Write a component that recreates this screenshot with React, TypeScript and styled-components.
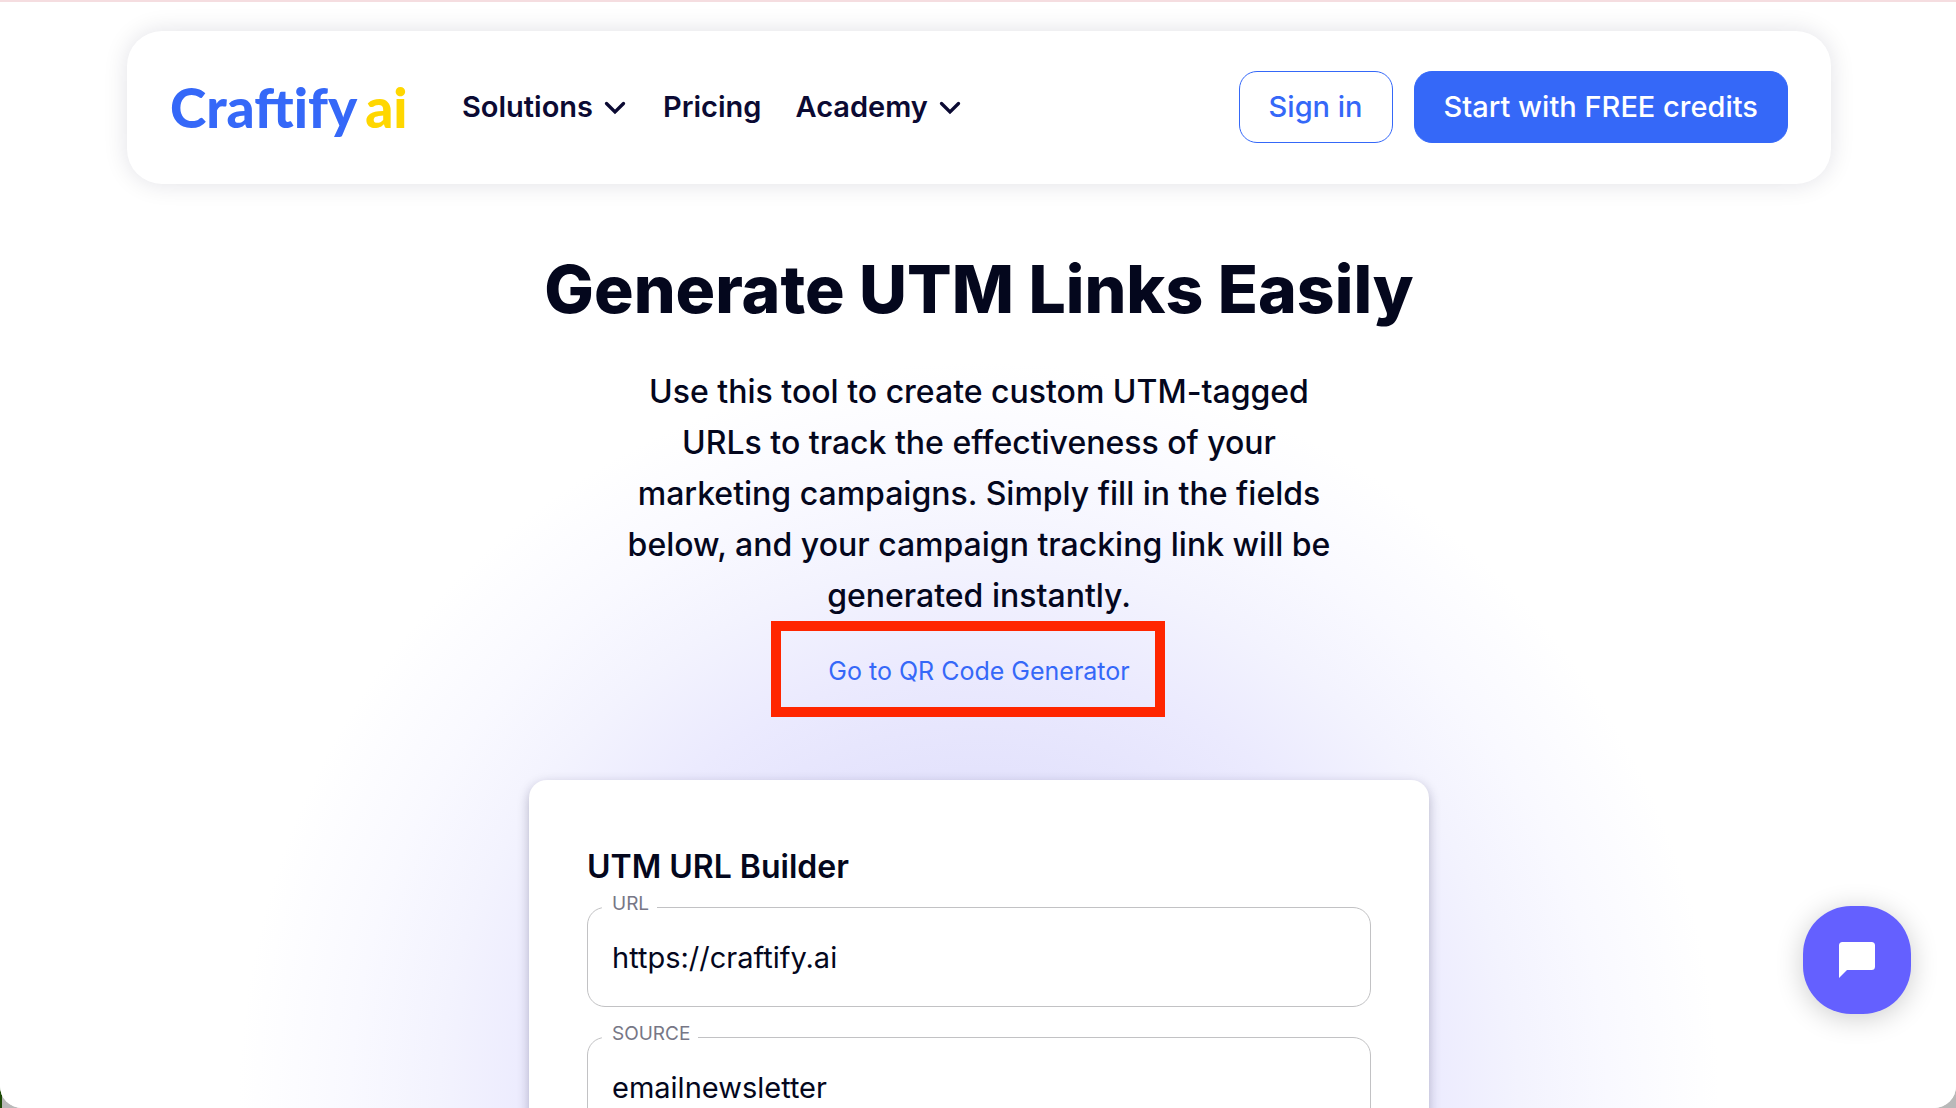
import React, { useState } from "react";
import styled, { createGlobalStyle } from "styled-components";

const ink = "#04071d";
const navy = "#0b0a33";
const blue = "#3568f8";

const GlobalStyle = createGlobalStyle`
  *, *::before, *::after { box-sizing: border-box; }
  body {
    margin: 0;
    background: linear-gradient(90deg, #1d4a06 2px, #b9b9b9 2px);
    font-family: Inter, "Liberation Sans", sans-serif;
    color: ${ink};
  }
  button, input { font: inherit; color: inherit; }
`;

const Page = styled.div`
  height: 100vh;
  overflow: hidden;
  padding-left: 2px;
  border-top: 2px solid #f5dde0;
  border-radius: 0 0 22px 22px;
  background: radial-gradient(
      circle 740px at calc(50% + 1px) 1100px,
      #dddcfb 0%,
      #e3e2fc 43%,
      #ebeafe 59%,
      #f3f3fe 73%,
      #f9f9ff 85%,
      #ffffff 100%
    )
    #ffffff;
`;

const Header = styled.header`
  display: flex;
  align-items: center;
  height: 153px;
  margin: 29px 125px 0;
  padding: 0 43px 2px;
  border-radius: 35px;
  background: #ffffff;
  box-shadow: 0 0 24px rgba(11, 10, 51, 0.12);
`;

const Logo = styled.a`
  display: flex;
  align-items: center;
  gap: 8px;
  width: 236px;
  margin-right: 56px;
  font-family: Lato, "Open Sans", sans-serif;
  font-size: 55px;
  font-weight: 900;
  line-height: 72px;
  color: ${blue};
  text-decoration: none;
`;

const LogoAccent = styled.span`
  color: #ffd700;
`;

const Nav = styled.nav`
  display: flex;
  align-items: center;
  gap: 34px;
  flex: 1;
`;

const navText = `
  font-size: 29px;
  font-weight: 600;
  line-height: 36px;
  color: ${navy};
`;

const NavLink = styled.a`
  ${navText}
  text-decoration: none;
`;

const NavMenu = styled.button`
  display: flex;
  align-items: center;
  gap: 8px;
  padding: 0;
  border: 0;
  background: none;
  && { ${navText} }
`;

const Actions = styled.div`
  display: flex;
  gap: 21px;
`;

const Button = styled.button<{ $primary?: boolean }>`
  height: 72px;
  padding: 0 29px;
  border: 1px solid ${blue};
  border-radius: 18px;
  background: ${(p) => (p.$primary ? blue : "#ffffff")};
  white-space: nowrap;
  && {
    font-size: 29px;
    font-weight: 500;
    color: ${(p) => (p.$primary ? "#ffffff" : blue)};
  }
`;

const Main = styled.main`
  display: flex;
  flex-direction: column;
  align-items: center;
`;

const Title = styled.h1`
  margin: 63px 0 0;
  font-size: 66px;
  font-weight: 800;
  line-height: 84px;
`;

const Intro = styled.p`
  width: 720px;
  margin: 35px 0 0;
  font-size: 32px;
  font-weight: 500;
  line-height: 51px;
  text-align: center;
`;

const LinkRow = styled.div`
  position: relative;
  display: flex;
  margin-top: 30px;
`;

const QrLink = styled.a`
  font-size: 25px;
  line-height: 40px;
  color: ${blue};
  text-decoration: none;
`;

const Highlight = styled.span`
  position: absolute;
  inset: -30px -35px -26px -57px;
  border: 10px solid #ff2600;
  pointer-events: none;
`;

const Card = styled.form`
  width: 900px;
  margin-top: 89px;
  padding: 67px 58px;
  border-radius: 18px;
  background: #ffffff;
  box-shadow: 0 4px 12px rgba(20, 18, 60, 0.28);
`;

const CardTitle = styled.h2`
  margin: 0 0 20px;
  font-size: 32px;
  font-weight: 600;
  line-height: 40px;
`;

const Field = styled.div`
  position: relative;
  margin-bottom: 30px;
`;

const FieldLabel = styled.label`
  position: absolute;
  top: -14px;
  left: 15px;
  padding: 0 8px 0 10px;
  background: #ffffff;
  font-size: 19px;
  line-height: 22px;
  color: #777786;
`;

const TextInput = styled.input`
  display: block;
  width: 100%;
  height: 100px;
  padding: 0 24px;
  border: 1px solid #c2c2c4;
  border-radius: 18px;
  background: #ffffff;
  outline: none;
  && { font-size: 29px; }
`;

const ChatButton = styled.button`
  position: fixed;
  right: 45px;
  bottom: 94px;
  display: grid;
  place-items: center;
  width: 108px;
  height: 108px;
  padding: 0;
  border: 0;
  border-radius: 48px;
  background: #6460ff;
  box-shadow: 0 4px 28px rgba(0, 0, 0, 0.2);
`;

const Chevron = () => (
  <svg width="28" height="28" viewBox="0 0 28 28" fill="none" aria-hidden="true">
    <path d="M5.500 10.500 14 19l8.500-8.500" stroke={navy} strokeWidth="3.300" strokeLinecap="round" strokeLinejoin="miter" />
  </svg>
);

type TextFieldProps = { id: string; label: string; initial: string };

const TextField = ({ id, label, initial }: TextFieldProps) => {
  const [value, setValue] = useState(initial);
  return (
    <Field>
      <TextInput id={id} value={value} onChange={(e) => setValue(e.target.value)} />
      <FieldLabel htmlFor={id}>{label}</FieldLabel>
    </Field>
  );
};

export default function App() {
  return (
    <>
      <GlobalStyle />
      <Page>
        <Header>
          <Logo href="#">
            <span>Craftify</span>
            <LogoAccent>ai</LogoAccent>
          </Logo>
          <Nav>
            <NavMenu type="button">
              Solutions
              <Chevron />
            </NavMenu>
            <NavLink href="#pricing">Pricing</NavLink>
            <NavMenu type="button">
              Academy
              <Chevron />
            </NavMenu>
          </Nav>
          <Actions>
            <Button type="button">Sign in</Button>
            <Button type="button" $primary>
              Start with FREE credits
            </Button>
          </Actions>
        </Header>
        <Main>
          <Title>Generate UTM Links Easily</Title>
          <Intro>
            Use this tool to create custom UTM-tagged URLs to track the effectiveness of your marketing
            campaigns. Simply fill in the fields below, and your campaign tracking link will be generated
            instantly.
          </Intro>
          <LinkRow>
            <QrLink href="#qr">Go to QR Code Generator</QrLink>
            <Highlight />
          </LinkRow>
          <Card onSubmit={(e) => e.preventDefault()}>
            <CardTitle>UTM URL Builder</CardTitle>
            <TextField id="url" label="URL" initial="https://craftify.ai" />
            <TextField id="source" label="SOURCE" initial="emailnewsletter" />
          </Card>
        </Main>
      </Page>
      <ChatButton type="button" aria-label="Open chat">
        <svg width="38" height="38" viewBox="0 0 38 38" aria-hidden="true">
          <path d="M4.500 1h29A3.500 3.500 0 0 1 37 4.500v21a3.500 3.500 0 0 1-3.500 3.500H9l-8 8V4.500A3.500 3.500 0 0 1 4.500 1z" fill="#ffffff" />
        </svg>
      </ChatButton>
    </>
  );
}
